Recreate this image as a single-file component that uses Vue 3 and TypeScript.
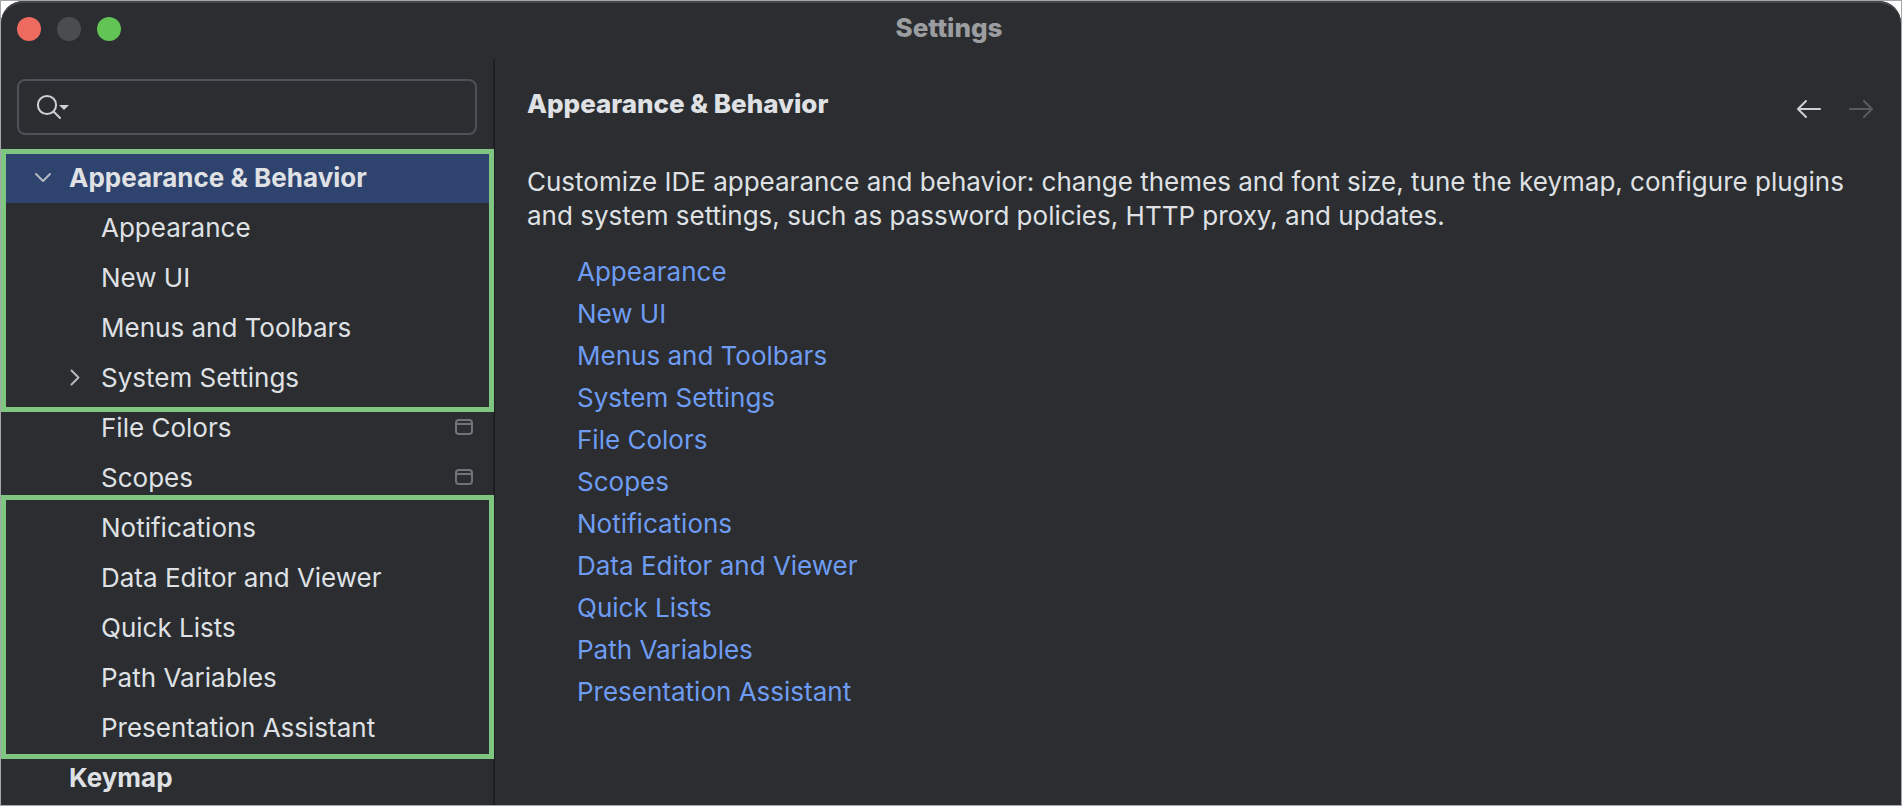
<script setup lang="ts">
import { ref } from 'vue'

interface Item {
  label: string
  kind: 'root' | 'child'
  arrow?: 'down' | 'right'
  project?: boolean
}

interface Group {
  frame: '' | 'first' | 'second'
  items: Item[]
}

const groups: Group[] = [
  {
    frame: 'first',
    items: [
      { label: 'Appearance & Behavior', kind: 'root', arrow: 'down' },
      { label: 'Appearance', kind: 'child' },
      { label: 'New UI', kind: 'child' },
      { label: 'Menus and Toolbars', kind: 'child' },
      { label: 'System Settings', kind: 'child', arrow: 'right' },
    ],
  },
  {
    frame: '',
    items: [
      { label: 'File Colors', kind: 'child', project: true },
      { label: 'Scopes', kind: 'child', project: true },
    ],
  },
  {
    frame: 'second',
    items: [
      { label: 'Notifications', kind: 'child' },
      { label: 'Data Editor and Viewer', kind: 'child' },
      { label: 'Quick Lists', kind: 'child' },
      { label: 'Path Variables', kind: 'child' },
      { label: 'Presentation Assistant', kind: 'child' },
    ],
  },
  { frame: '', items: [{ label: 'Keymap', kind: 'root' }] },
]

const links = groups.flatMap((g) => g.items).filter((i) => i.kind === 'child')
const selected = ref('Appearance & Behavior')
const query = ref('')
</script>

<template>
  <div class="frame">
    <div class="window">
      <header class="titlebar">
        <div class="lights">
          <button class="light close" type="button" aria-label="Close"></button>
          <button class="light minimize" type="button" aria-label="Minimize" disabled></button>
          <button class="light expand" type="button" aria-label="Zoom"></button>
        </div>
        <h1 class="title">Settings</h1>
      </header>

      <div class="body">
        <aside class="sidebar">
          <label class="search">
            <svg class="search-icon" width="36" height="28" viewBox="0 0 36 28" aria-hidden="true">
              <circle cx="12" cy="12" r="9.1" fill="none" stroke="#ced0d6" stroke-width="2" />
              <path d="M18.5 18.5L25 25" stroke="#ced0d6" stroke-width="2" stroke-linecap="round" />
              <path d="M24 12h10l-5 5z" fill="#ced0d6" />
            </svg>
            <input v-model="query" class="search-input" type="text" aria-label="Search settings" />
          </label>

          <nav class="tree" aria-label="Settings categories">
            <div v-for="(group, g) in groups" :key="g" class="group">
              <button
                v-for="item in group.items"
                :key="item.label"
                type="button"
                class="row"
                :class="[item.kind, { selected: item.label === selected }]"
                @click="selected = item.label"
              >
                <span class="arrow">
                  <svg v-if="item.arrow === 'down'" width="18" height="18" viewBox="0 0 18 18" aria-hidden="true">
                    <path d="M2 5l7 7 7-7" />
                  </svg>
                  <svg v-else-if="item.arrow === 'right'" width="18" height="18" viewBox="0 0 18 18" aria-hidden="true">
                    <path d="M5.5 1.5l7 7-7 7" />
                  </svg>
                </span>
                <span class="label">{{ item.label }}</span>
                <svg v-if="item.project" class="project" width="18" height="18" viewBox="0 0 18 18" aria-hidden="true">
                  <rect x="1" y="1" width="16" height="14" rx="3" />
                  <path d="M1 5h16" />
                </svg>
              </button>
              <div v-if="group.frame" class="outline" :class="group.frame"></div>
            </div>
          </nav>
        </aside>

        <main class="content">
          <div class="heading">
            <h2 class="page-title">Appearance &amp; Behavior</h2>
            <div class="history">
              <button type="button" class="nav-button" aria-label="Back">
                <svg width="26" height="20" viewBox="0 0 26 20" aria-hidden="true">
                  <path d="M24 10H2M10 2L2 10l8 8" />
                </svg>
              </button>
              <button type="button" class="nav-button" aria-label="Forward" disabled>
                <svg width="26" height="20" viewBox="0 0 26 20" aria-hidden="true">
                  <path d="M2 10h22M16 2l8 8-8 8" />
                </svg>
              </button>
            </div>
          </div>
          <p class="description">
            Customize IDE appearance and behavior: change themes and font size, tune the keymap, configure plugins and
            system settings, such as password policies, HTTP proxy, and updates.
          </p>
          <ul class="links">
            <li v-for="link in links" :key="link.label">
              <a href="#" @click.prevent="selected = link.label">{{ link.label }}</a>
            </li>
          </ul>
        </main>
      </div>
    </div>
  </div>
</template>

<style>
body {
  margin: 0;
  background: #fff;
}
</style>

<style scoped>
.frame {
  box-sizing: border-box;
  min-height: 100vh;
  display: flex;
  border: 1px solid #a4a6a9;
  background: #fff;
  color: #dfe1e5;
  font: 400 26px/34px Inter, 'Liberation Sans', sans-serif;
}

.window {
  flex: 1;
  display: flex;
  flex-direction: column;
  min-width: 0;
  border-radius: 22px 22px 0 0;
  background: #2b2d30;
  box-shadow: inset 0 2px 0 #45474a;
}

button {
  padding: 0;
  border: 0;
  background: none;
  color: inherit;
  font: inherit;
}

.titlebar {
  box-sizing: border-box;
  display: grid;
  grid-template-columns: 1fr auto 1fr;
  align-items: center;
  height: 58px;
  padding-bottom: 2px;
}

.lights {
  display: flex;
  gap: 16px;
  padding-left: 16px;
}

.light {
  width: 24px;
  height: 24px;
  border-radius: 50%;
}

.close {
  background: #ed6a5e;
}

.minimize {
  background: #4b4c4e;
}

.expand {
  background: #61c454;
}

.title {
  margin: 0 4px 2px 0;
  color: #9c9da0;
  font-size: 26px;
  font-weight: 800;
}

.body {
  flex: 1;
  display: flex;
}

.sidebar {
  flex: none;
  box-sizing: border-box;
  width: 494px;
  padding-top: 20px;
  border-right: 2px solid #1e1f22;
}

.search {
  display: flex;
  align-items: center;
  box-sizing: border-box;
  height: 56px;
  margin: 0 16px 18px;
  padding: 0 16px;
  border: 2px solid #4e5157;
  border-radius: 8px;
}

.search-icon {
  flex: none;
}

.search-input {
  flex: 1;
  min-width: 0;
  padding: 0 8px;
  border: 0;
  outline: 0;
  background: transparent;
  color: inherit;
  font: inherit;
}

.group {
  position: relative;
}

.row {
  display: flex;
  align-items: center;
  box-sizing: border-box;
  width: 100%;
  height: 50px;
  padding: 0 20px 0 33px;
  text-align: left;
}

.row.child {
  padding-left: 65px;
}

.row.root {
  font-weight: 700;
}

.row.selected {
  background: #2e436e;
}

.arrow {
  flex: none;
  display: flex;
  width: 35px;
}

.arrow path {
  fill: none;
  stroke: #b4b8bf;
  stroke-width: 2;
  stroke-linecap: round;
  stroke-linejoin: round;
}

.label {
  flex: 1;
}

.project {
  fill: none;
  stroke: #6f737a;
  stroke-width: 2;
}

.outline {
  position: absolute;
  left: 0;
  right: -1px;
  border: 5px solid #7fc681;
  pointer-events: none;
}

.outline.first {
  top: -4px;
  bottom: -9px;
}

.outline.second {
  top: -8px;
  bottom: -6px;
}

.content {
  flex: 1;
  min-width: 0;
  padding: 28px 27px 0 32px;
}

.heading {
  display: flex;
  justify-content: space-between;
  align-items: flex-start;
}

.page-title {
  margin: 0;
  font-size: 26px;
  font-weight: 800;
}

.history {
  display: flex;
  gap: 26px;
  padding-top: 12px;
}

.nav-button {
  display: flex;
}

.nav-button path {
  fill: none;
  stroke: #ced0d6;
  stroke-width: 2;
  stroke-linecap: round;
  stroke-linejoin: round;
}

.nav-button:disabled path {
  stroke: #5a5b5d;
}

.description {
  margin: 44px 0 18px;
}

.links {
  margin: 0;
  padding: 0 0 0 50px;
  list-style: none;
  line-height: 42px;
}

.links a {
  color: #6f9cf3;
  text-decoration: none;
}
</style>
